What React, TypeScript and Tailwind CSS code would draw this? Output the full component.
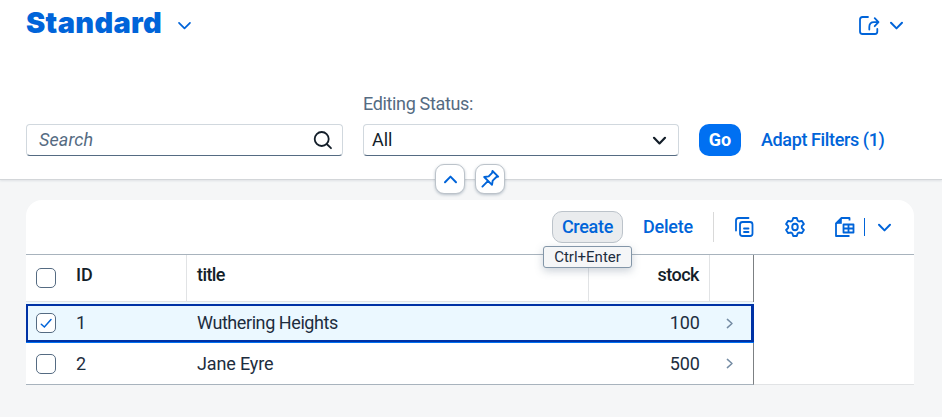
import type { ReactNode } from "react";

function Chevron({ className = "", dir = "down", w = 2 }: { className?: string; dir?: "down" | "up" | "right"; w?: number }) {
  const d = { down: "M2 4.8 L7.5 10.4 L13 4.8", up: "M2 10.2 L7.5 4.6 L13 10.2", right: "M5.4 3.4 L10 7.5 L5.4 11.6" }[dir];
  return (
    <svg viewBox="0 0 15 15" className={`h-[15px] w-[15px] shrink-0 ${className}`} fill="none" stroke="currentColor" strokeWidth={w} strokeLinecap="round" strokeLinejoin="round">
      <path d={d} />
    </svg>
  );
}

function Checkbox({ checked = false }: { checked?: boolean }) {
  return (
    <span className="flex h-5 w-5 shrink-0 items-center justify-center rounded-[5px] border border-[#556b82] bg-white">
      {checked && (
        <svg viewBox="0 0 18 18" className="h-[18px] w-[18px]" fill="none" stroke="#0064d9" strokeWidth="1.5" strokeLinecap="round">
          <path d="M4.3 10.2 L7.4 13 L14 5.6" />
        </svg>
      )}
    </span>
  );
}

function RoundButton({ children }: { children: ReactNode }) {
  return (
    <button className="flex h-[30px] w-[30px] items-center justify-center rounded-[9px] border border-[#bcc3ca] bg-white text-[#0064d9] shadow-[0_1px_3px_rgba(85,107,130,0.4)]">
      {children}
    </button>
  );
}

export default function App() {
  return (
    <div className="h-[417px] w-[942px] overflow-hidden bg-[#f5f6f7] font-[Roboto,'Liberation_Sans',sans-serif] text-[18px] leading-[22px] text-[#1d2d3e]">
      <header className="relative h-[180px] border-b border-[#d3d6d9] bg-white shadow-[0_1px_2px_rgba(85,107,130,0.14)]">
        <div className="flex h-[48px] items-center pr-[39px] pl-[26px] text-[#0064d9]">
          <h1 className="w-[151px] pb-[2px] font-[Inter,Roboto,sans-serif] text-[29px] leading-[36px] font-black tracking-[0.3px] whitespace-nowrap">Standard</h1>
          <Chevron className="mt-[2px]" w={1.7} />
          <svg viewBox="0 0 22 22" className="mt-[3px] ml-auto h-[22px] w-[22px]" fill="none" stroke="currentColor" strokeWidth="1.8" strokeLinecap="round" strokeLinejoin="round">
            <path d="M10 2H4.5Q2 2 2 4.5V16.5Q2 19 4.5 19H17Q19.3 19 19.3 16.5V14" />
            <path d="M11.3 14.5V12Q11.3 7.2 16 7.2H20M16.7 3.2L20.5 7.2L16.7 11.2" />
          </svg>
          <Chevron className="mt-[3px] mr-[-1px] ml-[9px]" />
        </div>
        <div className="flex h-[108px] items-end gap-5 pl-[26px]">
          <div className="flex h-8 w-[317px] items-center justify-between rounded-[4px] border border-b border-[#d1d8de] border-b-[#556b82] pr-[9px] pl-[12px]">
            <span className="tracking-[0.1px] text-[#556b82] italic">Search</span>
            <svg viewBox="0 0 20 20" className="h-5 w-5" fill="none" stroke="#131e29" strokeWidth="1.8" strokeLinecap="round">
              <circle cx="8.7" cy="9" r="7" />
              <path d="M13.7 14L18 18.2" />
            </svg>
          </div>
          <div>
            <div className="mb-[9px] tracking-[-0.35px] text-[#556b82]">Editing Status:</div>
            <div className="flex h-8 w-[316px] items-center justify-between rounded-[4px] border border-[#d1d8de] border-b-[#556b82] pr-[11px] pl-[8px] text-[#131e29]">
              <span>All</span>
              <Chevron w={2.2} />
            </div>
          </div>
          <button className="h-8 w-[42px] rounded-[10px] bg-[#0070f2] font-bold text-white">Go</button>
          <button className="h-8 font-medium tracking-[-0.38px] whitespace-nowrap text-[#0064d9]">Adapt Filters (1)</button>
        </div>
        <div className="absolute top-[164px] left-[435px] z-10 flex gap-[10px]">
          <RoundButton><Chevron dir="up" /></RoundButton>
          <RoundButton>
            <svg viewBox="0 0 20 20" className="h-5 w-5" fill="none" stroke="currentColor" strokeWidth="1.9" strokeLinejoin="round" strokeLinecap="round">
              <path d="M12.5 2L18.2 7.6L16.4 8L12.7 11.6L12 15.8L4.2 8L8.7 7.4L12.1 3.8ZM7.8 12.2L2.4 17.6" />
            </svg>
          </RoundButton>
        </div>
      </header>

      <main className="mt-5 ml-[26px] w-[888px] rounded-t-2xl bg-white">
        <div className="relative flex h-[55px] items-center border-b border-[#a8b3bd] pl-[526px] text-[#0064d9]">
          <button className="h-8 w-[71px] rounded-[10px] border border-[#bcc3ca] bg-[#eaecee] font-medium tracking-[-0.3px]">Create</button>
          <button className="ml-5 h-8 w-[50px] font-medium tracking-[-0.25px] whitespace-nowrap">Delete</button>
          <span className="ml-5 h-[30px] w-px bg-[#d9d9d9]" />
          <svg viewBox="0 0 20 22" className="ml-[20px] h-[22px] w-5" fill="none" stroke="currentColor" strokeWidth="1.8" strokeLinecap="round" strokeLinejoin="round">
            <path d="M2 14.5V4.5Q2 2 4.5 2H14.5" />
            <rect x="6" y="6" width="12.5" height="14" rx="2.5" />
            <path d="M10 12.5H14.5M10 16H14.5" />
          </svg>
          <svg viewBox="0 0 22 22" className="ml-[30px] h-[22px] w-[22px]" fill="none" stroke="currentColor" strokeWidth="1.9" strokeLinejoin="round">
            <path d="M9.2 2H12.8L13.7 4.7L15 5.5L17.8 4.9L19.9 8L17.8 10.2V11.8L19.9 14L17.8 17.1L15 16.5L13.7 17.3L12.8 20H9.2L8.3 17.3L7 16.5L4.2 17.1L2.1 14L4.2 11.8V10.2L2.1 8L4.2 4.9L7 5.5L8.3 4.7Z" />
            <ellipse cx="11" cy="11" rx="2.8" ry="3.3" />
          </svg>
          <svg viewBox="0 0 22 22" className="ml-[28px] h-[22px] w-[22px]" fill="none" stroke="currentColor" strokeWidth="1.8" strokeLinejoin="round">
            <path d="M15.5 4.5V2H7.5L2 7.5V20H15.5" />
            <path d="M2 7.5L7.5 2V7.5Z" fill="currentColor" strokeWidth="0.6" />
            <path d="M9.5 8.5H19.5V16.5H9.5ZM9.5 12.5H19.5M14.5 8.5V16.5" />
          </svg>
          <span className="ml-[8px] h-[18px] w-px bg-[#0064d9]" />
          <Chevron className="ml-[12px]" />
          <div className="absolute top-[46px] left-[517px] z-20 flex h-[22px] w-[89px] items-center justify-center rounded-[3px] border border-[#8396a8] bg-[#f5f6f7] text-[15px] leading-5 whitespace-nowrap text-[#1d2d3e] shadow-[0_3px_8px_rgba(85,107,130,0.3)]">Ctrl+Enter</div>
        </div>

        <div className="flex">
          <div className="w-[728px] border-r border-b border-r-[#7c8083] border-b-[#a8b3bd]">
            <div className="grid h-[47px] grid-cols-[50px_111px_402px_121px_43px] border-b border-[#e1e3e5] font-medium text-[#131e29]">
              <div className="flex items-center pl-[10px]"><Checkbox /></div>
              <div className="border-r border-[#e1e3e5] pt-[9px]">ID</div>
              <div className="border-r border-[#e1e3e5] pt-[9px] pl-[10px] tracking-[-0.6px]">title</div>
              <div className="border-r border-[#e1e3e5] pt-[9px] pr-[10px] text-right tracking-[-0.5px]">stock</div>
            </div>
            <div className="mr-[-1px] h-[41px] border-b border-[#0070f2] bg-[#ebf8ff] pt-[2px]">
              <div className="grid h-[38px] grid-cols-[48px_111px_402px_121px_41px] items-center border-2 border-r-[3px] border-[#0032a5]">
                <div className="pl-[8px]"><Checkbox checked /></div>
                <div>1</div>
                <div className="pl-[10px] tracking-[-0.42px]">Wuthering Heights</div>
                <div className="pr-[10px] text-right">100</div>
                <Chevron dir="right" className="ml-[12px] text-[#758ca4]" w={1.5} />
              </div>
            </div>
            <div className="grid h-[41px] grid-cols-[50px_111px_402px_121px_43px] items-center">
              <div className="pl-[10px]"><Checkbox /></div>
              <div>2</div>
              <div className="pl-[10px] tracking-[-0.15px]">Jane Eyre</div>
              <div className="pr-[10px] text-right">500</div>
              <Chevron dir="right" className="ml-[12px] text-[#758ca4]" w={1.5} />
            </div>
          </div>
          <div className="flex-1 border-b border-[#e1e3e5]" />
        </div>
      </main>
    </div>
  );
}
